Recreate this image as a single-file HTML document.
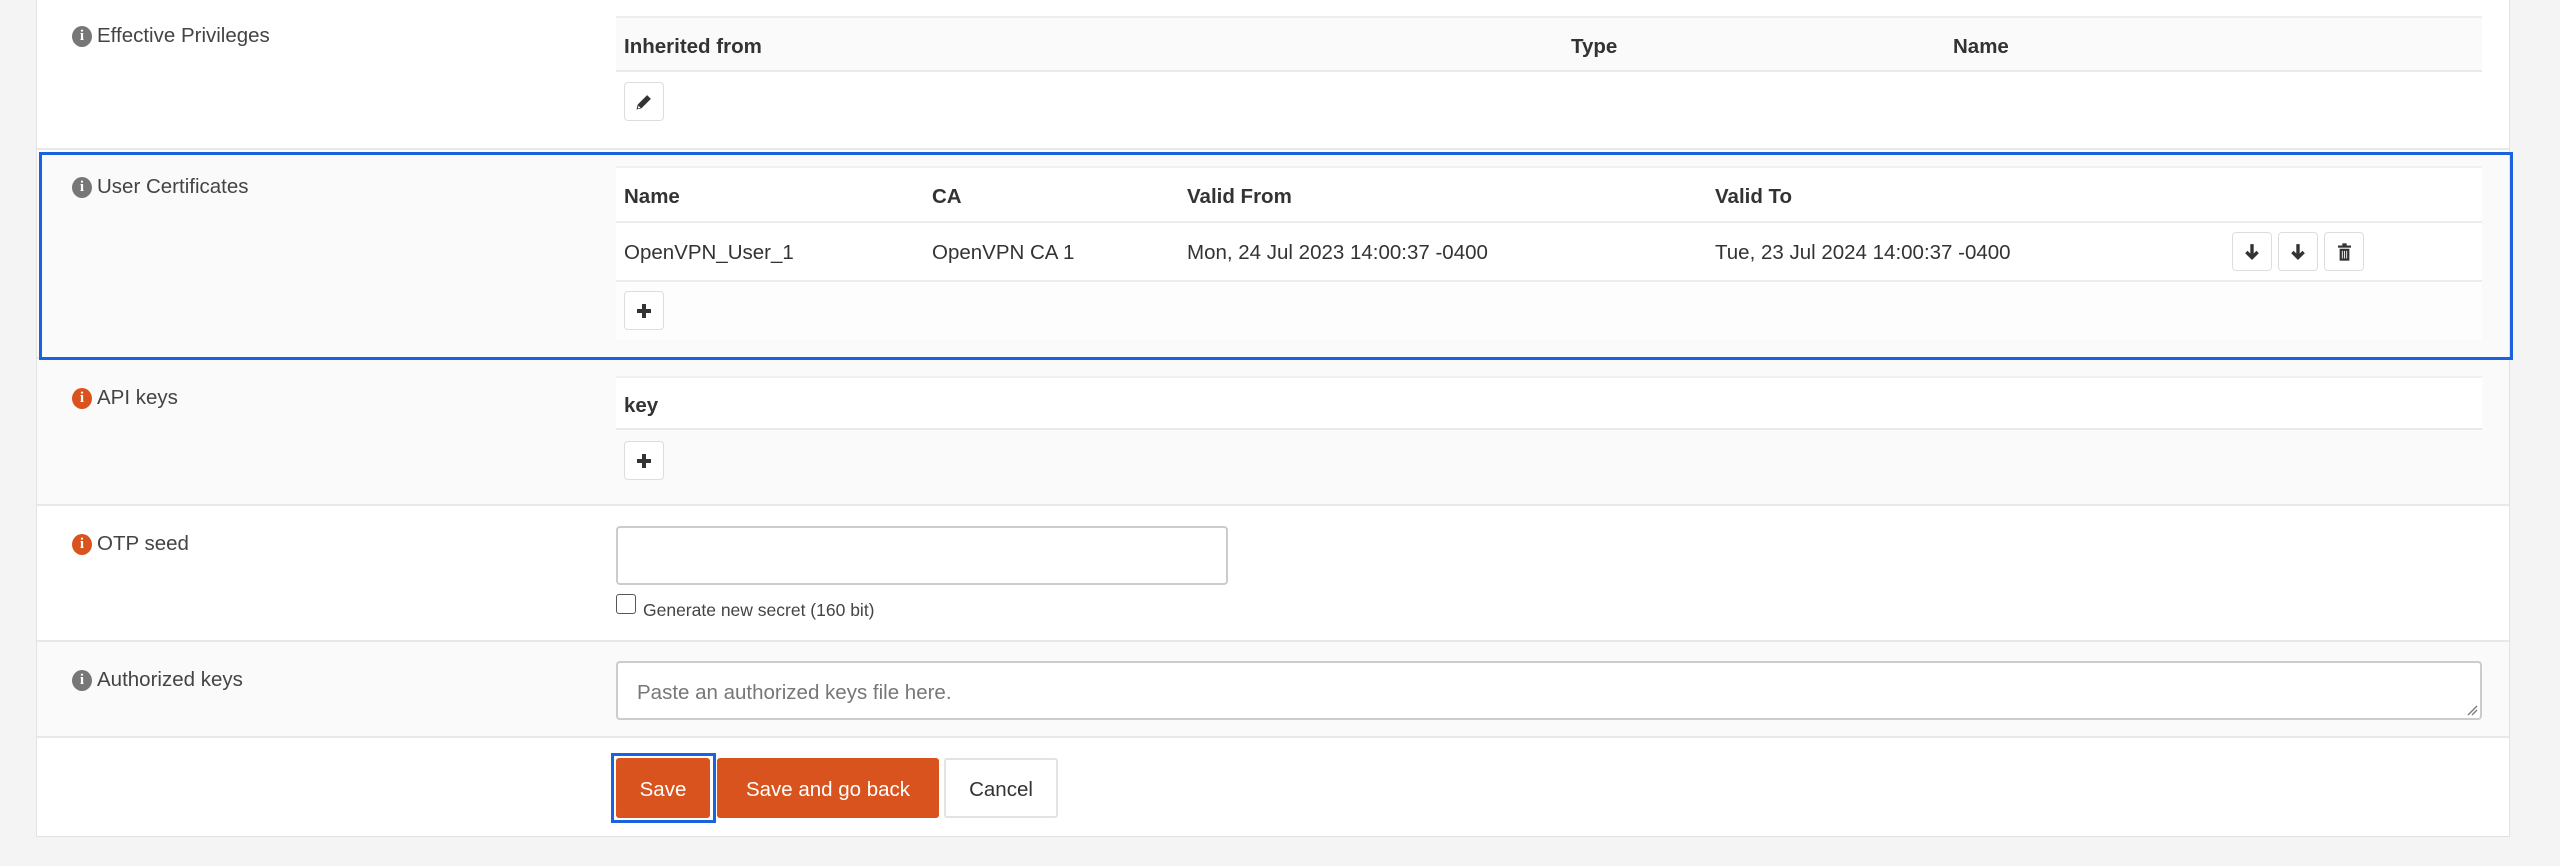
<!DOCTYPE html>
<html><head><meta charset="utf-8"><style>
*{box-sizing:border-box;margin:0;padding:0}
body{width:2560px;height:866px;background:#f4f4f4;font-family:"Liberation Sans",sans-serif;color:#333;position:relative;overflow:hidden;font-size:20.5px}
.a{position:absolute}
.panel{left:36px;top:0;width:2474px;height:837px;background:#fff;border:1px solid #e3e3e3;border-top:none}
.row{left:37px;width:2472px;border-bottom:2px solid #e8e8e8}
.lbl{position:absolute;left:72px;font-size:20.5px;color:#444;display:flex;align-items:center;gap:5px}
.ic{width:20px;height:21px;border-radius:50%;background:#777;color:#fff;font:bold 15px "Liberation Serif",serif;display:inline-flex;align-items:center;justify-content:center}
.ic.o{background:#d9531e}
.th{font-weight:bold;color:#333}
.btn{position:absolute;width:40px;height:39px;background:#fff;border:1px solid #ddd;border-radius:4px;display:flex;align-items:center;justify-content:center}
.line{position:absolute;height:2px;background:#ececec}
.ob{position:absolute;background:#d9531e;color:#fff;border-radius:3px;display:flex;align-items:center;justify-content:center;font-size:20.5px}
</style></head><body>
<div class="a panel"></div>
<div class="a row" style="top:0;height:150px;background:#fff"></div>
<div class="lbl" style="top:24px"><span class="ic">i</span>Effective Privileges</div>
<div class="a" style="left:616px;top:16px;width:1866px;height:56px;background:#fafafa;border-top:2px solid #eee;border-bottom:2px solid #eaeaea"></div>
<div class="a th" style="left:624px;top:35px">Inherited from</div>
<div class="a th" style="left:1571px;top:35px">Type</div>
<div class="a th" style="left:1953px;top:35px">Name</div>
<div class="btn" style="left:624px;top:82px"><svg width="20" height="20" viewBox="0 0 16 16"><path d="M2 14l1-4 7.5-7.5 3 3L6 13z" fill="#333"/><path d="M3 13.2l.6-2.2 1.6 1.6z" fill="#fff"/></svg></div>

<div class="a row" style="top:152px;height:207px;background:#fafafa"></div>
<div class="lbl" style="top:175px"><span class="ic">i</span>User Certificates</div>
<div class="a" style="left:616px;top:166px;width:1866px;height:174px;background:#fff;border-top:2px solid #f0f0f0"></div>
<div class="line" style="left:616px;top:221px;width:1866px"></div>
<div class="line" style="left:616px;top:280px;width:1866px"></div>
<div class="a" style="left:616px;top:282px;width:1866px;height:58px;background:#fdfdfd"></div>
<div class="a th" style="left:624px;top:185px">Name</div>
<div class="a th" style="left:932px;top:185px">CA</div>
<div class="a th" style="left:1187px;top:185px">Valid From</div>
<div class="a th" style="left:1715px;top:185px">Valid To</div>
<div class="a" style="left:624px;top:241px">OpenVPN_User_1</div>
<div class="a" style="left:932px;top:241px">OpenVPN CA 1</div>
<div class="a" style="left:1187px;top:241px">Mon, 24 Jul 2023 14:00:37 -0400</div>
<div class="a" style="left:1715px;top:241px">Tue, 23 Jul 2024 14:00:37 -0400</div>
<div class="btn" style="left:2232px;top:232px"><svg width="16" height="18" viewBox="0 0 14 16"><path d="M7 1v11M2 8l5 5 5-5" stroke="#333" stroke-width="3" fill="none"/></svg></div>
<div class="btn" style="left:2278px;top:232px"><svg width="16" height="18" viewBox="0 0 14 16"><path d="M7 1v11M2 8l5 5 5-5" stroke="#333" stroke-width="3" fill="none"/></svg></div>
<div class="btn" style="left:2324px;top:232px"><svg width="13" height="18" viewBox="0 0 12 16"><rect x="0" y="2" width="12" height="2" fill="#333"/><rect x="4" y="0" width="4" height="2" fill="#333"/><rect x="1.5" y="5" width="9" height="11" fill="#333"/><path d="M4 7v7M6 7v7M8 7v7" stroke="#fff" stroke-width="0.8"/></svg></div>
<div class="btn" style="left:624px;top:291px"><svg width="18" height="18"><path d="M9 2v14M2 9h14" stroke="#333" stroke-width="4"/></svg></div>
<div class="a" style="left:39px;top:152px;width:2474px;height:208px;border:3px solid #1a62e0"></div>

<div class="a row" style="top:360px;height:146px;background:#fafafa"></div>
<div class="lbl" style="top:386px"><span class="ic o">i</span>API keys</div>
<div class="a" style="left:616px;top:376px;width:1866px;height:54px;background:#fff;border-top:2px solid #f0f0f0;border-bottom:2px solid #eaeaea"></div>
<div class="a th" style="left:624px;top:394px">key</div>
<div class="btn" style="left:624px;top:441px"><svg width="18" height="18"><path d="M9 2v14M2 9h14" stroke="#333" stroke-width="4"/></svg></div>

<div class="a row" style="top:506px;height:136px;background:#fff"></div>
<div class="lbl" style="top:532px"><span class="ic o">i</span>OTP seed</div>
<div class="a" style="left:616px;top:526px;width:612px;height:59px;border:2px solid #ccc;border-radius:4px;background:#fff"></div>
<div class="a" style="left:616px;top:594px;width:20px;height:20px;border:1.5px solid #555;border-radius:3px;background:#fff"></div>
<div class="a" style="left:643px;top:600px;font-size:17.5px;color:#444">Generate new secret (160 bit)</div>

<div class="a row" style="top:642px;height:96px;background:#fafafa"></div>
<div class="lbl" style="top:668px"><span class="ic">i</span>Authorized keys</div>
<div class="a" style="left:616px;top:661px;width:1866px;height:59px;border:2px solid #ccc;border-radius:4px;background:#fff"></div>
<div class="a" style="left:637px;top:681px;color:#777">Paste an authorized keys file here.</div>
<svg class="a" style="left:2466px;top:704px" width="12" height="12"><path d="M2 11L11 2M6 11l5-5" stroke="#777" stroke-width="1.3"/></svg>

<div class="a" style="left:37px;top:738px;width:2472px;height:98px;background:#fff"></div>
<div class="a" style="left:611px;top:753px;width:105px;height:70px;border:3px solid #1a62e0"></div>
<div class="ob" style="left:616px;top:758px;width:94px;height:60px;padding-top:3px">Save</div>
<div class="ob" style="left:717px;top:758px;width:222px;height:60px;padding-top:3px">Save and go back</div>
<div class="a" style="left:944px;top:758px;width:114px;height:60px;border:2px solid #e3e3e3;border-radius:3px;background:#fff;display:flex;align-items:center;justify-content:center;padding-top:3px">Cancel</div>
</body></html>
